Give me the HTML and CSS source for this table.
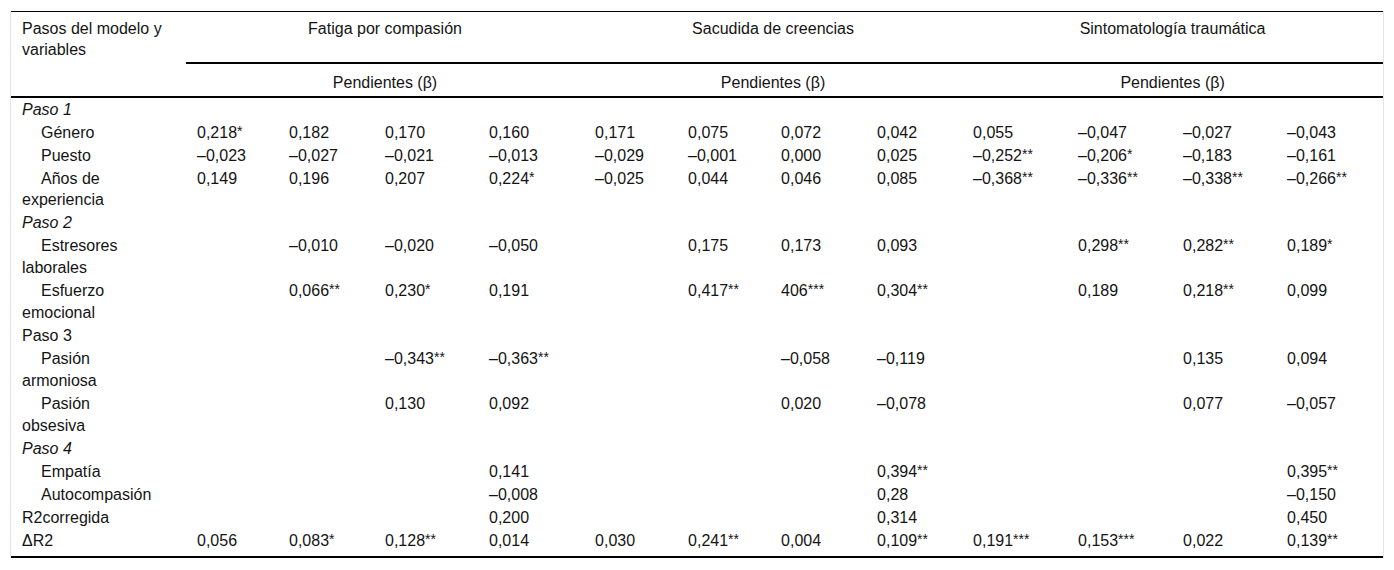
FILE: index.html
```html
<!DOCTYPE html>
<html lang="es">
<head>
<meta charset="utf-8">
<title>Tabla</title>
<link rel="stylesheet" href="styles.css">
</head>
<body>
<div class="wrap">
<table class="tbl">
<colgroup>
<col class="c0"><col class="c1"><col class="c2"><col class="c3"><col class="c4"><col class="c5"><col class="c6"><col class="c7"><col class="c8"><col class="c9"><col class="c10"><col class="c11"><col class="c12">
</colgroup>
<thead>
<tr class="h1">
<th class="corner" rowspan="2">Pasos del modelo y variables</th>
<th class="grp" colspan="4">Fatiga por compasión</th>
<th class="grp" colspan="4">Sacudida de creencias</th>
<th class="grp" colspan="4">Sintomatología traumática</th>
</tr>
<tr class="h2">
<th class="sub" colspan="4">Pendientes (β)</th>
<th class="sub" colspan="4">Pendientes (β)</th>
<th class="sub" colspan="4">Pendientes (β)</th>
</tr>
</thead>
<tbody>
<tr class="first"><td class="step"><i>Paso 1</i></td><td></td><td></td><td></td><td></td><td></td><td></td><td></td><td></td><td></td><td></td><td></td><td></td></tr>
<tr><td class="var">Género</td><td>0,218<sup>*</sup></td><td>0,182</td><td>0,170</td><td>0,160</td><td>0,171</td><td>0,075</td><td>0,072</td><td>0,042</td><td>0,055</td><td>–0,047</td><td>–0,027</td><td>–0,043</td></tr>
<tr><td class="var">Puesto</td><td>–0,023</td><td>–0,027</td><td>–0,021</td><td>–0,013</td><td>–0,029</td><td>–0,001</td><td>0,000</td><td>0,025</td><td>–0,252<sup>**</sup></td><td>–0,206<sup>*</sup></td><td>–0,183</td><td>–0,161</td></tr>
<tr><td class="var">Años de experiencia</td><td>0,149</td><td>0,196</td><td>0,207</td><td>0,224<sup>*</sup></td><td>–0,025</td><td>0,044</td><td>0,046</td><td>0,085</td><td>–0,368<sup>**</sup></td><td>–0,336<sup>**</sup></td><td>–0,338<sup>**</sup></td><td>–0,266<sup>**</sup></td></tr>
<tr><td class="step"><i>Paso 2</i></td><td></td><td></td><td></td><td></td><td></td><td></td><td></td><td></td><td></td><td></td><td></td><td></td></tr>
<tr><td class="var">Estresores laborales</td><td></td><td>–0,010</td><td>–0,020</td><td>–0,050</td><td></td><td>0,175</td><td>0,173</td><td>0,093</td><td></td><td>0,298<sup>**</sup></td><td>0,282<sup>**</sup></td><td>0,189<sup>*</sup></td></tr>
<tr><td class="var">Esfuerzo emocional</td><td></td><td>0,066<sup>**</sup></td><td>0,230<sup>*</sup></td><td>0,191</td><td></td><td>0,417<sup>**</sup></td><td>406<sup>***</sup></td><td>0,304<sup>**</sup></td><td></td><td>0,189</td><td>0,218<sup>**</sup></td><td>0,099</td></tr>
<tr><td class="step">Paso 3</td><td></td><td></td><td></td><td></td><td></td><td></td><td></td><td></td><td></td><td></td><td></td><td></td></tr>
<tr><td class="var">Pasión armoniosa</td><td></td><td></td><td>–0,343<sup>**</sup></td><td>–0,363<sup>**</sup></td><td></td><td></td><td>–0,058</td><td>–0,119</td><td></td><td></td><td>0,135</td><td>0,094</td></tr>
<tr><td class="var">Pasión obsesiva</td><td></td><td></td><td>0,130</td><td>0,092</td><td></td><td></td><td>0,020</td><td>–0,078</td><td></td><td></td><td>0,077</td><td>–0,057</td></tr>
<tr><td class="step"><i>Paso 4</i></td><td></td><td></td><td></td><td></td><td></td><td></td><td></td><td></td><td></td><td></td><td></td><td></td></tr>
<tr><td class="var">Empatía</td><td></td><td></td><td></td><td>0,141</td><td></td><td></td><td></td><td>0,394<sup>**</sup></td><td></td><td></td><td></td><td>0,395<sup>**</sup></td></tr>
<tr><td class="var">Autocompasión</td><td></td><td></td><td></td><td>–0,008</td><td></td><td></td><td></td><td>0,28</td><td></td><td></td><td></td><td>–0,150</td></tr>
<tr><td class="step">R2corregida</td><td></td><td></td><td></td><td>0,200</td><td></td><td></td><td></td><td>0,314</td><td></td><td></td><td></td><td>0,450</td></tr>
<tr class="last"><td class="step">ΔR2</td><td>0,056</td><td>0,083<sup>*</sup></td><td>0,128<sup>**</sup></td><td>0,014</td><td>0,030</td><td>0,241<sup>**</sup></td><td>0,004</td><td>0,109<sup>**</sup></td><td>0,191<sup>***</sup></td><td>0,153<sup>***</sup></td><td>0,022</td><td>0,139<sup>**</sup></td></tr>
</tbody>
</table>
</div>
</body>
</html>
```

FILE: styles.css
```css
html, body {
  margin: 0;
  padding: 0;
  background: #fff;
}
body {
  font-family: "Liberation Sans", Arial, sans-serif;
  font-size: 16px;
  color: #141414;
}
.wrap {
  margin: 11px 0 0 10px;
  width: 1372px;
  border-left: 1px solid #e4e4e4;
  border-right: 1px solid #e4e4e4;
}
.tbl {
  width: 1372px;
  table-layout: fixed;
  border-collapse: collapse;
  border-top: 1px solid #000;
  border-bottom: 2px solid #000;
}
.c0 { width: 175px; }
.c1 { width: 92px; }
.c2 { width: 96px; }
.c3 { width: 104px; }
.c4 { width: 106px; }
.c5 { width: 93px; }
.c6 { width: 93px; }
.c7 { width: 96px; }
.c8 { width: 96px; }
.c9 { width: 105px; }
.c10 { width: 105px; }
.c11 { width: 104px; }
.c12 { width: 107px; }
th {
  font-weight: normal;
  line-height: 21px;
  vertical-align: top;
}
.corner {
  text-align: left;
  padding: 6px 20px 0 11px;
  border-bottom: 2px solid #000;
}
.grp {
  text-align: center;
  padding: 6px 11px 23px;
  border-bottom: 2px solid #000;
}
.sub {
  text-align: center;
  padding: 8px 11px 3px;
  border-bottom: 2px solid #000;
}
td {
  padding: 0.65px 11px;
  line-height: 21.75px;
  vertical-align: top;
  text-align: left;
}
td.step, td.var { padding-right: 31px; }
tr.first td { padding-top: 0.5px; }
tr.last td { padding-bottom: 4.5px; }
.var { text-indent: 19px; }
sup {
  font-size: 14px;
  line-height: 0;
  vertical-align: 2px;
}
```
